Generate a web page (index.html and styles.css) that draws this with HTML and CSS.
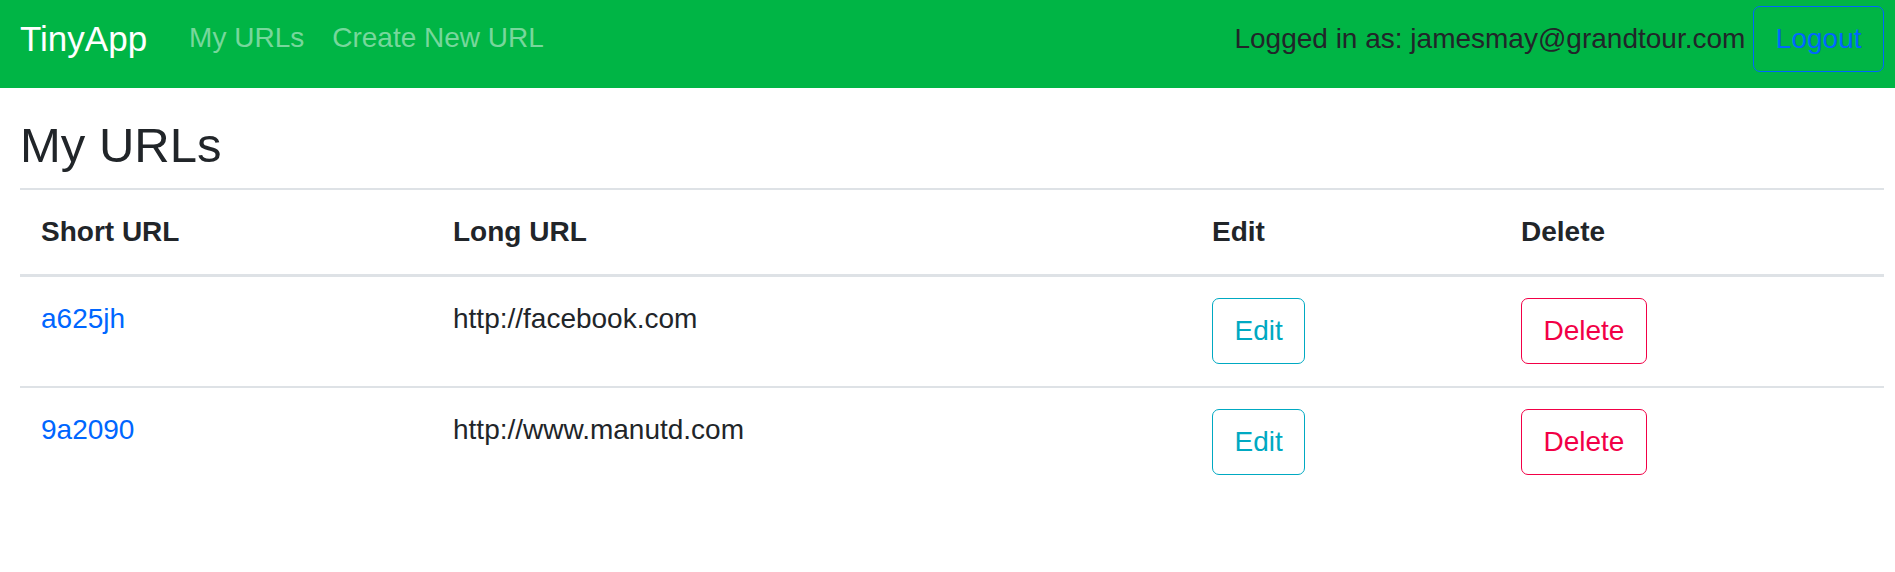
FILE: index.html
```html
<!DOCTYPE html>
<html lang="en">
<head>
<meta charset="utf-8">
<title>TinyApp</title>
<link rel="stylesheet" href="styles.css">
</head>
<body>
<nav class="navbar">
  <a class="brand" href="#">TinyApp</a>
  <a class="nav-link" href="#">My URLs</a>
  <a class="nav-link" href="#">Create New URL</a>
  <div class="user-area">
    <span class="user-text">Logged in as: jamesmay@grandtour.com</span>
    <button class="btn btn-primary" type="button">Logout</button>
  </div>
</nav>
<main class="container">
  <h3 class="page-title">My URLs</h3>
  <table class="url-table">
    <colgroup>
      <col class="col-short">
      <col class="col-long">
      <col class="col-edit">
      <col class="col-delete">
    </colgroup>
    <thead>
      <tr>
        <th>Short URL</th>
        <th>Long URL</th>
        <th>Edit</th>
        <th>Delete</th>
      </tr>
    </thead>
    <tbody>
      <tr>
        <td><a class="short-link" href="#">a625jh</a></td>
        <td>http://facebook.com</td>
        <td><button class="btn btn-info" type="button">Edit</button></td>
        <td><button class="btn btn-danger" type="button">Delete</button></td>
      </tr>
      <tr>
        <td><a class="short-link" href="#">9a2090</a></td>
        <td>http://www.manutd.com</td>
        <td><button class="btn btn-info" type="button">Edit</button></td>
        <td><button class="btn btn-danger" type="button">Delete</button></td>
      </tr>
    </tbody>
  </table>
</main>
</body>
</html>
```

FILE: styles.css
```css
html, body {
  margin: 0;
  padding: 0;
  background: #ffffff;
}

body {
  font-family: "Liberation Sans", Arial, Helvetica, sans-serif;
  font-size: 28px;
  line-height: 42px;
  color: #212529;
}

a {
  text-decoration: none;
}

.navbar {
  display: flex;
  align-items: flex-start;
  box-sizing: border-box;
  height: 88px;
  padding: 0 11px 0 20px;
  background: #00b545;
}

.brand {
  font-size: 35px;
  line-height: 42px;
  margin-top: 18px;
  margin-right: 28px;
  color: #ffffff;
}

.nav-link {
  font-size: 28px;
  line-height: 42px;
  margin-top: 17px;
  padding: 0 14px;
  color: rgba(255, 255, 255, 0.47);
}

.user-area {
  margin-left: auto;
  margin-top: 6px;
  display: flex;
  align-items: baseline;
  gap: 8px;
}

.user-text {
  color: #212529;
}

.btn {
  font-family: "Liberation Sans", Arial, Helvetica, sans-serif;
  font-size: 28px;
  line-height: 42px;
  padding: 11px 21.5px;
  border: 1px solid currentColor;
  border-radius: 7px;
  background: transparent;
  cursor: pointer;
}

.btn-primary {
  color: #0066ff;
}

.btn-info {
  color: #00a9c2;
}

.btn-danger {
  color: #f20046;
}

.container {
  padding: 28px 11px 0 20px;
}

.page-title {
  margin: 0 0 13px;
  font-size: 49px;
  line-height: 1.2;
  font-weight: 400;
  color: #212529;
}

.url-table {
  width: 100%;
  table-layout: fixed;
  border-collapse: collapse;
}

.col-short { width: 412px; }
.col-long { width: 759px; }
.col-edit { width: 309px; }

.url-table th,
.url-table td {
  text-align: left;
  vertical-align: top;
  padding: 21px;
}

.url-table th {
  font-weight: 700;
  border-top: 2px solid #dee2e6;
  border-bottom: 3px solid #dee2e6;
}

.url-table td {
  padding-bottom: 22px;
  border-top: 2px solid #dee2e6;
}

.short-link {
  color: #0066ff;
}
```
